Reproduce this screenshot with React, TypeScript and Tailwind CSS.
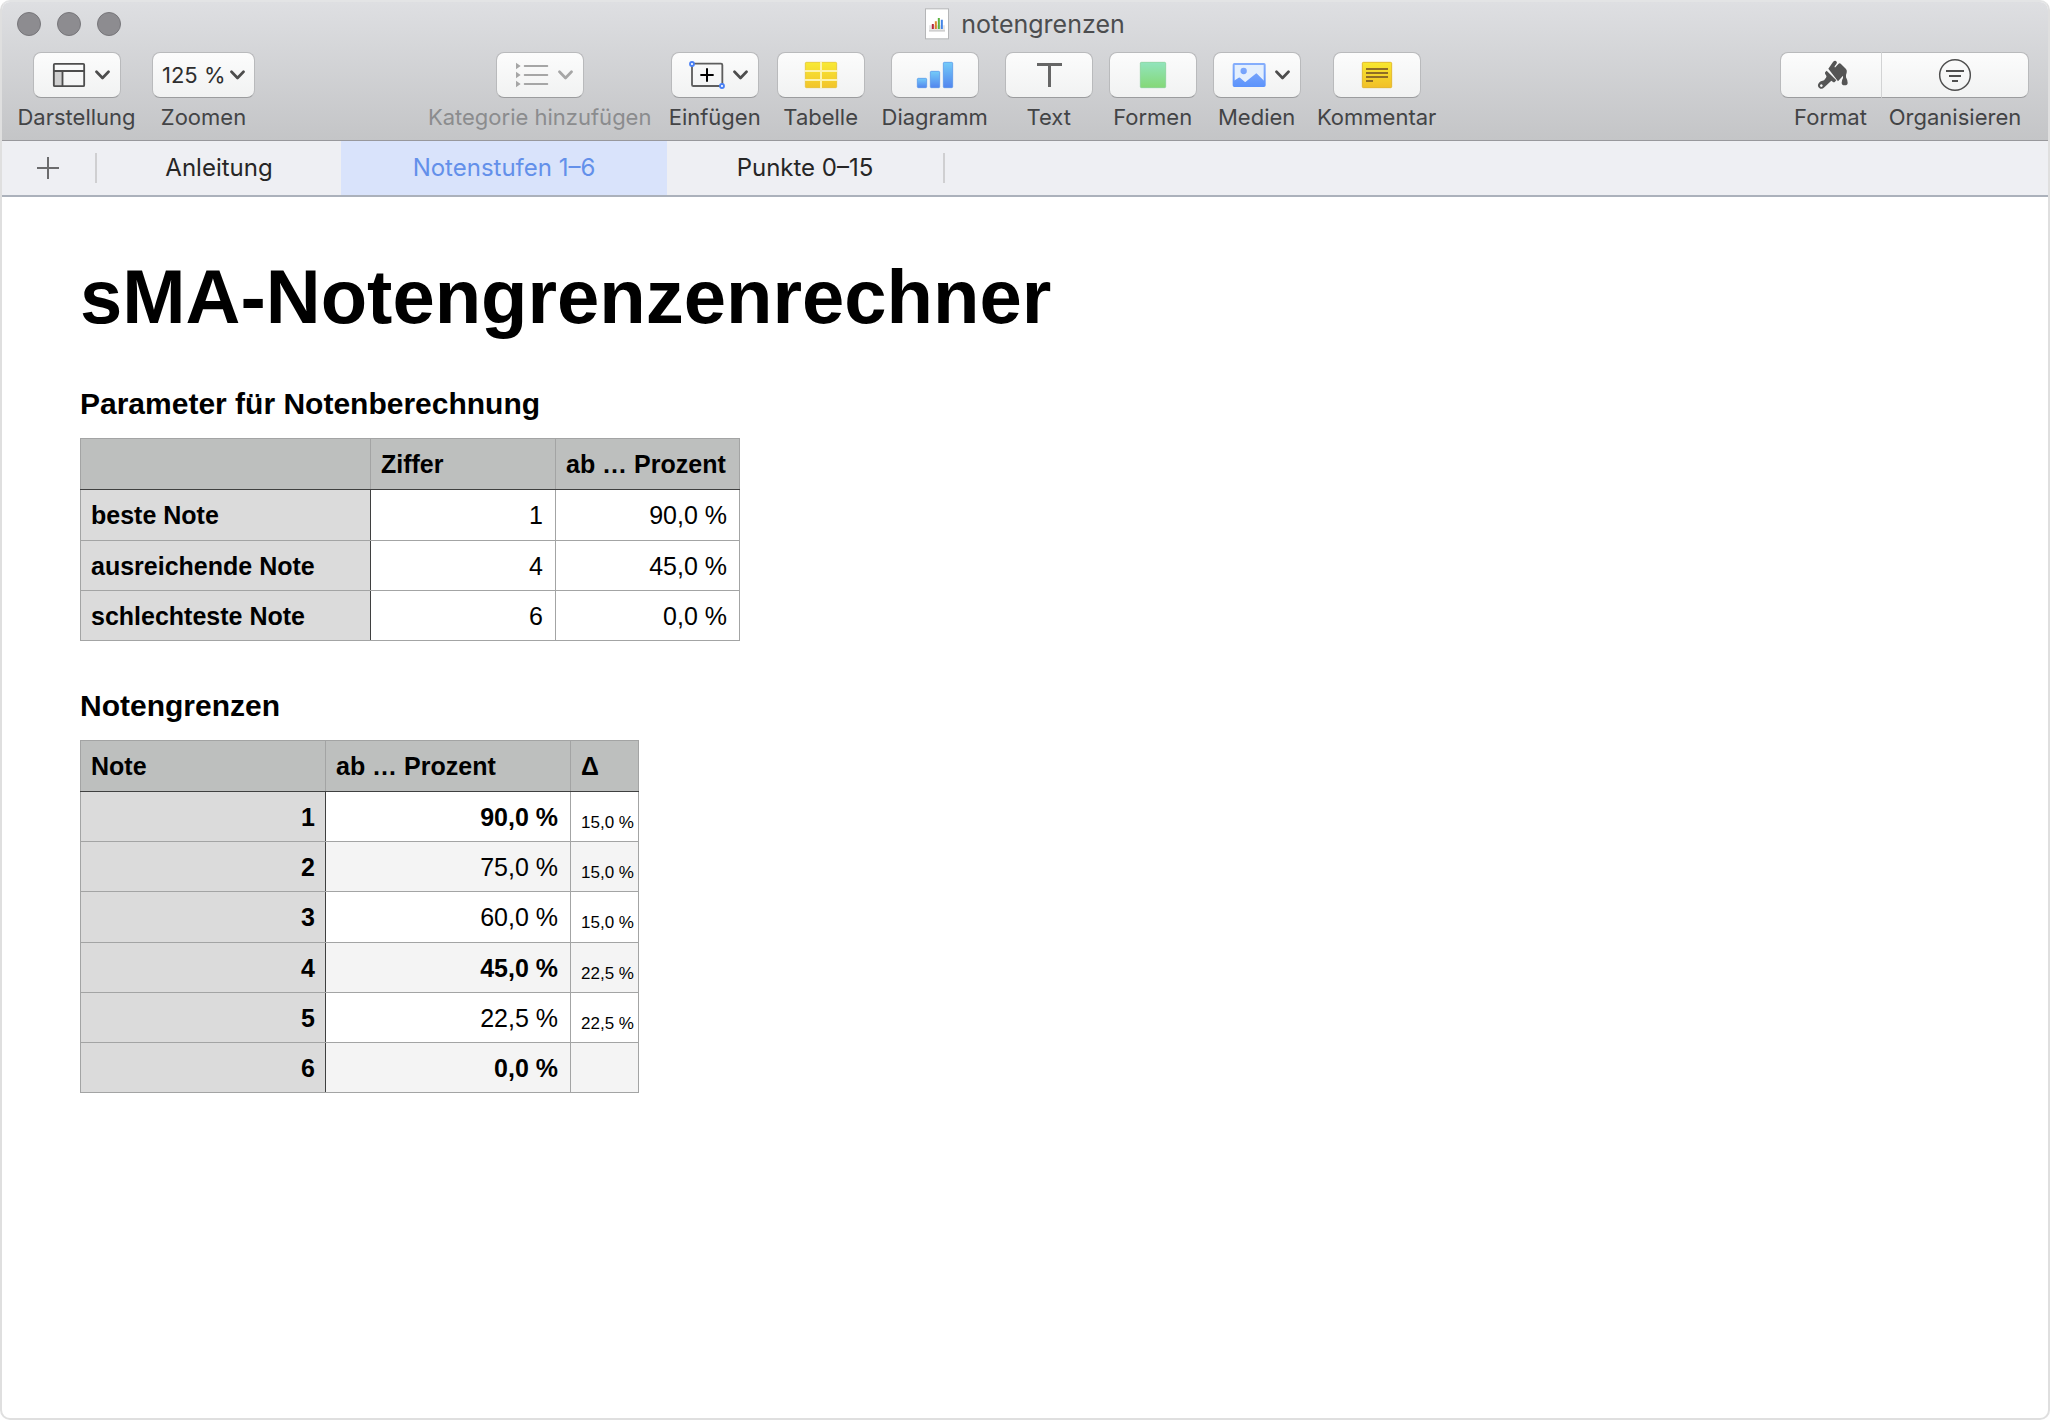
import React, { ReactNode } from "react";

function Glyph({ children }: { children: ReactNode }) {
  return (
    <svg viewBox="0 0 108 90" className="h-[30px] w-9 shrink-0 overflow-visible" fill="none" aria-hidden="true">
      {children}
    </svg>
  );
}

function Chevron({ className = "" }: { className?: string }) {
  return (
    <svg viewBox="0 0 15 10" className={`h-[10px] w-[15px] shrink-0 ${className}`} fill="none" stroke="currentColor" strokeWidth="2.7" strokeLinecap="round" strokeLinejoin="round" aria-hidden="true">
      <path d="M1.5 1.8 7.5 8l6-6.2" />
    </svg>
  );
}

const panelIcon = (
  <Glyph>
    <path d="M8.5 33H35v46H8.5z" fill="#cfcfcf" />
    <rect x="8.5" y="11.5" width="91" height="67" rx="3" stroke="#4d4d4d" strokeWidth="5.5" />
    <path d="M8 33h92M34.500 33v46" stroke="#4d4d4d" strokeWidth="5.500" />
  </Glyph>
);

const categoryIcon = (
  <Glyph>
    <path d="M6 8.500 20 18 6 27.500zM6 35.500 20 45 6 54.500zM6 62.500 20 72 6 81.500z" fill="#a6a6a6" />
    <path d="M32 18h68M32 45h68M32 72h68" stroke="#a6a6a6" strokeWidth="5.500" strokeLinecap="round" />
  </Glyph>
);

const insertIcon = (
  <Glyph>
    <rect x="9" y="11" width="91" height="67" rx="4" stroke="#5e5e5e" strokeWidth="5.500" />
    <path d="M54 25v40M34 45h40" stroke="#000" strokeWidth="6" />
    <g fill="#fff" stroke="#4a80f5" strokeWidth="5.500">
      <circle cx="9" cy="12" r="6" />
      <circle cx="99" cy="78" r="6" />
    </g>
  </Glyph>
);

const tableIcon = (
  <Glyph>
    <defs>
      <linearGradient id="tableFill" x2="0" y2="1">
        <stop stopColor="#f8ea35" />
        <stop offset="1" stopColor="#f2c42a" />
      </linearGradient>
    </defs>
    <rect x="7" y="7" width="94" height="76" rx="3" fill="url(#tableFill)" stroke="#e3bd26" strokeWidth="2" />
    <path d="M6 33h96M6 60h96M54 6v78" stroke="#fdf3ae" strokeWidth="6" />
  </Glyph>
);

const chartIcon = (
  <Glyph>
    <defs>
      <linearGradient id="barFill" x2="0" y2="1">
        <stop stopColor="#74cbf8" />
        <stop offset="1" stopColor="#5285ee" />
      </linearGradient>
    </defs>
    <g fill="url(#barFill)" stroke="#4c8ee8" strokeWidth="2">
      <rect x="1" y="55" width="28" height="28" rx="3" />
      <rect x="40" y="34" width="28" height="49" rx="3" />
      <rect x="79" y="7" width="28" height="76" rx="3" />
    </g>
  </Glyph>
);

const textIcon = (
  <Glyph>
    <path d="M18 13.500h75M55.500 13.500V81" stroke="#666" strokeWidth="9" />
  </Glyph>
);

const shapeIcon = (
  <Glyph>
    <defs>
      <linearGradient id="shapeFill" x2="0" y2="1">
        <stop stopColor="#92e4bd" />
        <stop offset="1" stopColor="#85d877" />
      </linearGradient>
    </defs>
    <rect x="16" y="7" width="76" height="76" rx="3" fill="url(#shapeFill)" stroke="#7fcd92" strokeWidth="2" />
  </Glyph>
);

const mediaIcon = (
  <Glyph>
    <defs>
      <linearGradient id="mediaFill" gradientUnits="userSpaceOnUse" x1="0" y1="9" x2="0" y2="81">
        <stop stopColor="#86aefc" />
        <stop offset="1" stopColor="#5c93fb" />
      </linearGradient>
    </defs>
    <rect x="8" y="12" width="93" height="66" rx="2" fill="#e4effd" stroke="url(#mediaFill)" strokeWidth="6" />
    <circle cx="38" cy="33" r="9.500" fill="url(#mediaFill)" />
    <path d="M8 63 23 53Q25 52 27 53L41 65Q43 67 46 64L74 41Q76 39 78 41L99 62V78H8z" fill="url(#mediaFill)" />
  </Glyph>
);

const commentIcon = (
  <Glyph>
    <defs>
      <linearGradient id="commentFill" x2="0" y2="1">
        <stop stopColor="#f8e82f" />
        <stop offset="1" stopColor="#f1bf28" />
      </linearGradient>
    </defs>
    <rect x="10" y="7" width="88" height="76" rx="3" fill="url(#commentFill)" stroke="#dfb020" strokeWidth="2.500" />
    <path d="M21 27h66M21 39h66M21 51h66M21 63h21" stroke="#8f6d25" strokeWidth="6" />
  </Glyph>
);

const brushIcon = (
  <Glyph>
    <g transform="translate(14 0)" fill="#555">
      <path d="M32 26 46 6Q52-1 57 5 59 8 56 12L51 19Q50 23 53 22L62 12Q66 8 70 12L85 27Q89 32 87 38L85 45V52Q90 61 90 68 90 76 81 76 72 76 72 68 72 61 76 54V47L61 64Z" />
      <path fillRule="evenodd" d="M27 32 56 61 52 65Q49 68 45 65L41 62 20 82Q12 90 5 84-3 77 4 68 9 62 15 62 20 62 22 57L25 53Q28 49 25 46L23 43Q20 39 23 36ZM11 73a4 4 0 1 0 .1 0Z" />
    </g>
  </Glyph>
);

const organizeIcon = (
  <Glyph>
    <circle cx="54" cy="45" r="46" stroke="#4f4f4f" strokeWidth="4.500" />
    <path d="M27 33h54M36 48h36M45 63h18" stroke="#4f4f4f" strokeWidth="5.500" />
  </Glyph>
);

type Tool = { label: string; icon: ReactNode; menu?: boolean; disabled?: boolean; width: string };

const tools: Tool[] = [
  { label: "Kategorie hinzufügen", icon: categoryIcon, menu: true, disabled: true, width: "w-[226px]" },
  { label: "Einfügen", icon: insertIcon, menu: true, width: "w-[92px]" },
  { label: "Tabelle", icon: tableIcon, width: "w-[88px]" },
  { label: "Diagramm", icon: chartIcon, width: "w-[108px]" },
  { label: "Text", icon: textIcon, width: "w-[88px]" },
  { label: "Formen", icon: shapeIcon, width: "w-[88px]" },
  { label: "Medien", icon: mediaIcon, menu: true, width: "w-[88px]" },
  { label: "Kommentar", icon: commentIcon, width: "w-[120px]" },
];

function ToolButton({ label, icon, menu, disabled, width }: Tool) {
  return (
    <button type="button" disabled={disabled} aria-haspopup={menu ? "menu" : undefined} className={`flex flex-col items-center ${width}`}>
      <span
        className={`flex h-[46px] w-[88px] items-center rounded-lg border border-[#b9babc] border-b-[#9b9c9e] bg-linear-to-b from-[#fcfcfc] to-[#f1f2f2] ${
          menu ? "justify-end gap-2 pr-[10px]" : "justify-center"
        }`}
      >
        {icon}
        {menu && <Chevron className={disabled ? "text-[#a6a6a6]" : "text-[#4d4d4d]"} />}
      </span>
      <span className={`mt-[3px] text-[22px] leading-8 whitespace-nowrap ${disabled ? "text-[#8b8c8e]" : "text-[#434446]"}`}>{label}</span>
    </button>
  );
}

function Segment({ label, icon, shape }: { label: string; icon: ReactNode; shape: string }) {
  return (
    <button type="button" className="flex flex-col items-center">
      <span className={`flex h-[46px] items-center justify-center border-y border-[#b9babc] border-b-[#9b9c9e] bg-linear-to-b from-[#fcfcfc] to-[#f1f2f2] ${shape}`}>
        {icon}
      </span>
      <span className="mt-[3px] text-[22px] leading-8 text-[#434446]">{label}</span>
    </button>
  );
}

function DocumentIcon() {
  return (
    <svg viewBox="0 0 72 96" className="h-8 w-6" aria-hidden="true">
      <rect x="1.500" y="2.500" width="69" height="90" fill="#fff" stroke="#b5b6b8" strokeWidth="3" />
      <path d="M12 52h48v15H12z" fill="#e6e6e6" />
      <path d="M12 68.500h48" stroke="#c2c2c2" strokeWidth="4" />
      <path d="M20.500 48h6v15h-6z" fill="#b8283c" />
      <path d="M29.500 40h6v23h-6z" fill="#d9852c" />
      <path d="M38.500 30h6v33h-6z" fill="#5cb33f" />
      <path d="M47.500 35h6v28h-6z" fill="#4384e6" />
    </svg>
  );
}

function TitleBar() {
  return (
    <div className="grid h-11 grid-cols-3 items-center px-[15px]">
      <div className="flex gap-4">
        {["Schließen", "Minimieren", "Vergrößern"].map((name) => (
          <button key={name} type="button" aria-label={name} className="size-6 rounded-full border border-[#77767a] bg-[#8d8c90]" />
        ))}
      </div>
      <div className="flex items-center justify-center gap-3">
        <DocumentIcon />
        <span className="text-[25px] leading-8 text-[#4c4d4f]">notengrenzen</span>
      </div>
    </div>
  );
}

function Toolbar() {
  return (
    <div className="flex items-start pt-[6px] pr-[19px] pb-[7px] pl-[15px]">
      <div className="flex gap-4">
        <ToolButton label="Darstellung" icon={panelIcon} menu width="w-[119px]" />
        <div className="flex w-[103px] flex-col items-center">
          <div className="relative">
            <select
              id="zoom"
              defaultValue="125"
              className="h-[46px] w-[103px] appearance-none rounded-lg border border-[#b9babc] border-b-[#9b9c9e] bg-linear-to-b from-[#fcfcfc] to-[#f1f2f2] pl-[9px] text-[22px] text-[#2e2e2e]"
            >
              <option value="100">100 %</option>
              <option value="125">125 %</option>
              <option value="150">150 %</option>
            </select>
            <Chevron className="pointer-events-none absolute top-[18px] right-[10px] text-[#4d4d4d]" />
          </div>
          <label htmlFor="zoom" className="mt-[3px] text-[22px] leading-8 text-[#434446]">
            Zoomen
          </label>
        </div>
      </div>
      <div className="grow" />
      <div className="flex gap-4">
        {tools.map((tool) => (
          <ToolButton key={tool.label} {...tool} />
        ))}
      </div>
      <div className="grow-2" />
      <div className="flex">
        <Segment label="Format" icon={brushIcon} shape="w-[101px] rounded-l-lg border-l" />
        <Segment label="Organisieren" icon={organizeIcon} shape="w-[148px] rounded-r-lg border-x border-l-[#d2d3d4]" />
      </div>
    </div>
  );
}

const sheets = [
  { name: "Anleitung", width: "w-[244px]" },
  { name: "Notenstufen 1–6", width: "w-[326px]", active: true },
  { name: "Punkte 0–15", width: "w-[276px]" },
];

function SheetTabs() {
  return (
    <nav className="flex h-14 items-center border-b-2 border-[#abb1bb] bg-[#eeeff3]">
      <button type="button" aria-label="Neues Blatt" className="flex w-[93px] pl-[35px]">
        <svg viewBox="0 0 22 22" className="size-[22px]" stroke="#6b6b6d" strokeWidth="2" aria-hidden="true">
          <path d="M11 0v22M0 11h22" />
        </svg>
      </button>
      <span className="h-[30px] w-0.5 bg-[#cfcfd1]" />
      {sheets.map((sheet) => (
        <button
          key={sheet.name}
          type="button"
          aria-current={sheet.active ? "page" : undefined}
          className={`h-full text-2xl ${sheet.width} ${sheet.active ? "bg-[#d9e3fb] text-[#6390ea]" : "text-[#262626]"}`}
        >
          {sheet.name}
        </button>
      ))}
      <span className="h-[30px] w-0.5 bg-[#cfcfd1]" />
    </nav>
  );
}

const headCell = "border border-[#a3a4a4] border-b-[#3f4040] bg-[#bdbfbe] px-[10px] text-left font-bold whitespace-nowrap";
const rowHead = "border border-[#a3a4a4] border-r-[#3f4040] bg-[#dbdbdb] px-[10px] font-bold";
const bodyCell = "border border-[#a3a4a4] px-3 text-right whitespace-nowrap";

const parameters = [
  ["beste Note", "1", "90,0 %"],
  ["ausreichende Note", "4", "45,0 %"],
  ["schlechteste Note", "6", "0,0 %"],
];

const limits = [
  { grade: "1", from: "90,0 %", delta: "15,0 %", strong: true },
  { grade: "2", from: "75,0 %", delta: "15,0 %" },
  { grade: "3", from: "60,0 %", delta: "15,0 %" },
  { grade: "4", from: "45,0 %", delta: "22,5 %", strong: true },
  { grade: "5", from: "22,5 %", delta: "22,5 %" },
  { grade: "6", from: "0,0 %", delta: "", strong: true },
];

function ParameterTable() {
  return (
    <table aria-labelledby="parameters" className="mt-[14px] w-[659px] table-fixed border-collapse text-[25px] leading-8">
      <colgroup>
        <col className="w-[290px]" />
        <col className="w-[185px]" />
        <col className="w-[184px]" />
      </colgroup>
      <thead>
        <tr className="h-[51px]">
          <td className={headCell} />
          <th scope="col" className={headCell}>Ziffer</th>
          <th scope="col" className={headCell}>ab … Prozent</th>
        </tr>
      </thead>
      <tbody>
        {parameters.map(([name, digit, percent]) => (
          <tr key={name} className="h-[50px] first:h-[51px]">
            <th scope="row" className={`${rowHead} text-left`}>{name}</th>
            <td className={bodyCell}>{digit}</td>
            <td className={bodyCell}>{percent}</td>
          </tr>
        ))}
      </tbody>
    </table>
  );
}

function LimitTable() {
  return (
    <table aria-labelledby="limits" className="mt-[14px] w-[558px] table-fixed border-collapse text-[25px] leading-8">
      <colgroup>
        <col className="w-[245px]" />
        <col className="w-[245px]" />
        <col className="w-[68px]" />
      </colgroup>
      <thead>
        <tr className="h-[51px]">
          <th scope="col" className={headCell}>Note</th>
          <th scope="col" className={headCell}>ab … Prozent</th>
          <th scope="col" className={headCell}>Δ</th>
        </tr>
      </thead>
      <tbody>
        {limits.map((row) => (
          <tr key={row.grade} className="h-[50px] even:bg-[#f4f4f4] nth-3:h-[51px]">
            <th scope="row" className={`${rowHead} text-right`}>{row.grade}</th>
            <td className={`${bodyCell} ${row.strong ? "font-bold" : ""}`}>{row.from}</td>
            <td className="border border-[#a3a4a4] pt-3 pr-1 text-right text-[17px] whitespace-nowrap">{row.delta}</td>
          </tr>
        ))}
      </tbody>
    </table>
  );
}

export default function App() {
  return (
    <div className="flex min-h-screen flex-col overflow-hidden rounded-[10px] border-2 border-[#dfdfdf] border-t-[#e3e4e5] bg-white font-[Inter,sans-serif]">
      <header className="border-b border-[#98989c] bg-linear-to-b from-[#dedfe2] to-[#c4c5c7]">
        <TitleBar />
        <Toolbar />
      </header>
      <SheetTabs />
      <main className="grow px-[78px] pt-[60px] font-['Liberation_Sans',Arial,sans-serif] text-black">
        <h1 className="text-[76px] leading-[80px] font-bold">sMA-Notengrenzenrechner</h1>
        <section className="mt-[47px]">
          <h2 id="parameters" className="text-[30px] leading-10 font-bold">Parameter für Notenberechnung</h2>
          <ParameterTable />
        </section>
        <section className="mt-[45px]">
          <h2 id="limits" className="text-[30px] leading-10 font-bold">Notengrenzen</h2>
          <LimitTable />
        </section>
      </main>
    </div>
  );
}
